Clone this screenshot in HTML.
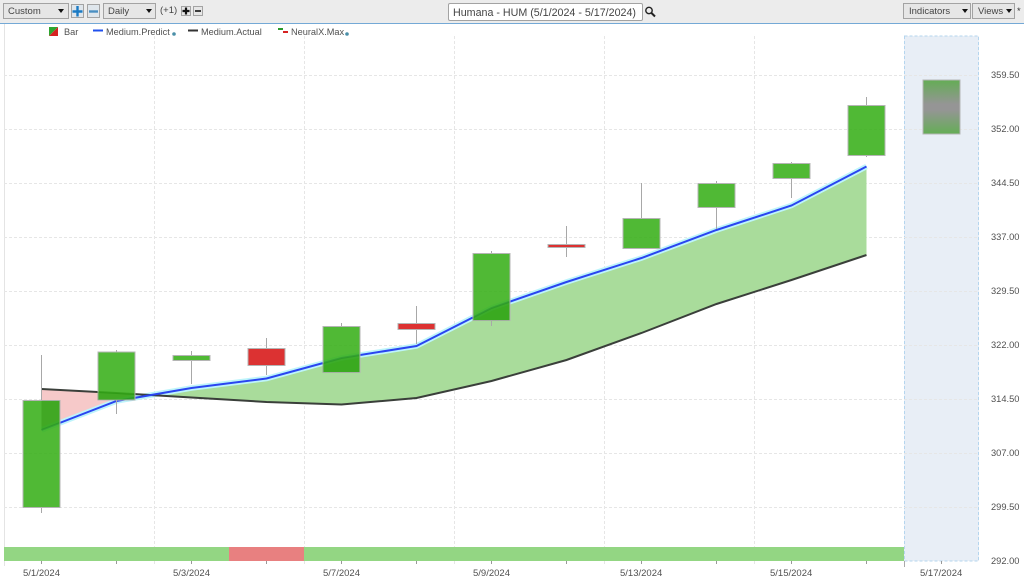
<!DOCTYPE html>
<html>
<head>
<meta charset="utf-8">
<style>
html,body{margin:0;padding:0;background:#fff}
#p{position:relative;width:1024px;height:583px;overflow:hidden;background:#fff;font-family:"Liberation Sans",sans-serif;color:#444}
#tb{position:absolute;left:0;top:0;width:1024px;height:23px;background:#ececec;border-bottom:1px solid #74a9d6}
.b{position:absolute;box-sizing:border-box;border:1px solid #a3a3a3;background:#e6e6e6;font-size:9.5px;line-height:15px;color:#444;white-space:nowrap;padding-left:4px}
.ar{position:absolute;width:0;height:0;border-left:3.5px solid transparent;border-right:3.5px solid transparent;border-top:4px solid #111}
.t{position:absolute;font-size:9.3px;line-height:12px;white-space:nowrap;color:#505050}
.x{font-size:9.5px}
.l{font-size:9.2px;top:26px}
svg{position:absolute;left:0;top:0}
</style>
</head>
<body>
<div id="p">
<div id="tb"></div>
<div class="b" style="left:3px;top:3px;width:66px;height:16px">Custom<span class="ar" style="left:54px;top:5px"></span></div>
<div class="b" style="left:71px;top:4px;width:13px;height:14px;background:#dfe6ec"></div>
<div class="b" style="left:87px;top:4px;width:13px;height:14px;background:#dfe6ec"></div>
<div class="b" style="left:103px;top:3px;width:53px;height:16px">Daily<span class="ar" style="left:42px;top:5px"></span></div>
<div class="t" style="left:160px;top:5px;color:#444;font-size:9.5px">(+1)</div>
<div class="b" style="left:181px;top:6px;width:10px;height:10px"></div>
<div class="b" style="left:193px;top:6px;width:10px;height:10px"></div>
<div class="b" style="left:448px;top:3px;width:195px;height:18px;background:#fff;border-radius:2px;font-size:10.7px;line-height:18px;padding-left:4px">Humana - HUM (5/1/2024 - 5/17/2024)</div>
<div class="b" style="left:903px;top:3px;width:68px;height:16px;padding-left:5px">Indicators<span class="ar" style="left:58px;top:5px"></span></div>
<div class="b" style="left:972px;top:3px;width:43px;height:16px;padding-left:5px">Views<span class="ar" style="left:33px;top:5px"></span></div>
<div class="t" style="left:1017px;top:5px;color:#333">*</div>

<svg width="1024" height="583" viewBox="0 0 1024 583">
<defs>
<linearGradient id="g" x1="0" y1="0" x2="0" y2="1">
<stop offset="0" stop-color="#64ad55"/><stop offset=".45" stop-color="#959595"/><stop offset=".55" stop-color="#959595"/><stop offset="1" stop-color="#64ad55"/>
</linearGradient>
<clipPath id="cc">
<rect x="22.500" y="400.500" width="37" height="107"/>
<rect x="97.500" y="352" width="37" height="48"/>
<rect x="322.500" y="326.500" width="37" height="46"/>
<rect x="472.500" y="253.500" width="37" height="67"/>
</clipPath>
</defs>
<!-- toolbar icons -->
<path d="M77.500 6v10.500M72.500 11.500h10" stroke="#1a7ac4" stroke-width="2.400" fill="none"/>
<path d="M89 11.500h9" stroke="#4a8fc2" stroke-width="2.400" fill="none"/>
<path d="M186 7.500v7M182.500 11h7" stroke="#111" stroke-width="2.200" fill="none"/>
<path d="M195 11h6" stroke="#111" stroke-width="1.600" fill="none"/>
<circle cx="649" cy="10.500" r="3.200" fill="none" stroke="#222" stroke-width="1.400"/>
<path d="M651.500 13l3.500 3.500" stroke="#222" stroke-width="2"/>
<!-- left rail -->
<path d="M4.500 24V566" stroke="#e4e4e4" stroke-width="1"/>
<!-- future panel -->
<rect x="904" y="36" width="75" height="525" fill="#e8eef6"/>
<path d="M904.500 36H978.500V561H904.500Z" fill="none" stroke="#b5d5ee" stroke-dasharray="3 2"/>
<!-- grid -->
<g stroke="#e6e6e6" stroke-dasharray="3 2" fill="none">
<path d="M4 75.500H979M4 129.500H979M4 183.500H979M4 237.500H979M4 291.500H979M4 345.500H979M4 399.500H979M4 453.500H979M4 507.500H979"/>
<path d="M154.500 36V566M304.500 36V566M454.500 36V566M604.500 36V566M754.500 36V566"/>
</g>
<!-- area fills -->
<path d="M41.500 389L116.500 393L153.500 395.200L116.500 401L41.500 430Z" fill="#f6c9c9"/>
<path d="M153.500 395.200L191.500 388L266.500 378.500L341.500 358L416.500 346L491.500 308L566.500 282L641.500 258L716.500 230L791.500 205.500L866.500 166.500V255L791.500 280L716.500 304L641.500 333L566.500 360L491.500 381L416.500 398L341.500 404.500L266.500 402L191.500 397.500Z" fill="#a9dc9b"/>
<!-- lines -->
<polyline points="41.500,430 116.500,401 191.500,388 266.500,378.500 341.500,358 416.500,346 491.500,308 566.500,282 641.500,258 716.500,230 791.500,205.500 866.500,166.500" fill="none" stroke="#bdf4fb" stroke-width="5.500"/>
<polyline points="41.500,389 116.500,393 191.500,397.500 266.500,402 341.500,404.500 416.500,398 491.500,381 566.500,360 641.500,333 716.500,304 791.500,280 866.500,255" fill="none" stroke="#3a3f3a" stroke-width="2"/>
<polyline points="41.500,430 116.500,401 191.500,388 266.500,378.500 341.500,358 416.500,346 491.500,308 566.500,282 641.500,258 716.500,230 791.500,205.500 866.500,166.500" fill="none" stroke="#2a45f0" stroke-width="2"/>
<!-- wicks, only outside the candle bodies -->
<path d="M41.500 355V400M41.500 508V513M116.500 350V352M116.500 400V414M191.500 351V355M191.500 361V384M266.500 338V348M266.500 366V375M341.500 323V326M416.500 306V323M416.500 330V344M491.500 251V253M491.500 321V326M566.500 226V244M566.500 248V257M641.500 183V218M716.500 181V183M716.500 208V229M791.500 162V163M791.500 179V198M866.500 97V105M866.500 156V157" stroke="#a8a8a8" stroke-width="1" fill="none"/>
<!-- candles -->
<g stroke="#b5b5b5" stroke-width="1">
<g fill="#38af19" fill-opacity=".88">
<rect x="23" y="400.500" width="37" height="107"/>
<rect x="98" y="352" width="37" height="48"/>
<rect x="173" y="355.500" width="37" height="5"/>
<rect x="323" y="326.500" width="37" height="46"/>
<rect x="473" y="253.500" width="37" height="67"/>
<rect x="623" y="218.500" width="37" height="30"/>
<rect x="698" y="183.500" width="37" height="24"/>
<rect x="773" y="163.500" width="37" height="15"/>
<rect x="848" y="105.500" width="37" height="50"/>
</g>
<g fill="#dc3232">
<rect x="248" y="348.500" width="37" height="17"/>
<rect x="398" y="323.500" width="37" height="6"/>
<rect x="548" y="244.500" width="37" height="3"/>
</g>
<rect x="923" y="80" width="37" height="54" fill="url(#g)"/>
</g>
<!-- darker tint where the area overlaps a candle -->
<g clip-path="url(#cc)">
<path d="M41.500 389L116.500 393L153.500 395.200L116.500 401L41.500 430Z" fill="rgba(20,130,0,.22)"/>
<path d="M153.500 395.200L191.500 388L266.500 378.500L341.500 358L416.500 346L491.500 308L566.500 282L641.500 258V333L566.500 360L491.500 381L416.500 398L341.500 404.500L266.500 402L191.500 397.500Z" fill="rgba(20,130,0,.22)"/>
</g>
<!-- bottom band -->
<rect x="4" y="547" width="225" height="14" fill="#93d683"/>
<rect x="229" y="547" width="75" height="14" fill="#e88080"/>
<rect x="304" y="547" width="600" height="14" fill="#93d683"/>
<!-- ticks -->
<path d="M41.500 561V564M116.500 561V564M191.500 561V564M266.500 561V564M341.500 561V564M416.500 561V564M491.500 561V564M566.500 561V564M641.500 561V564M716.500 561V564M791.500 561V564M866.500 561V564M941.500 561V564" stroke="#999"/>
<path d="M904.500 561V567" stroke="#aaa"/>
<!-- legend icons -->
<path d="M49 27H58L49 36Z" fill="#2fa52f"/><path d="M58 27V36H49Z" fill="#d62222"/>
<path d="M93 30.500H103" stroke="#2050ee" stroke-width="2"/>
<path d="M188 30.500H198" stroke="#333" stroke-width="2"/>
<rect x="278" y="28" width="5" height="2" fill="#2a9a2a"/>
<rect x="283" y="31" width="5" height="2" fill="#d62222"/>
<circle cx="174" cy="34" r="1.800" fill="#4a8fa8"/>
<circle cx="347" cy="34" r="1.800" fill="#4a8fa8"/>
</svg>

<!-- legend text -->
<div class="t l" style="left:64px">Bar</div>
<div class="t l" style="left:106px">Medium.Predict</div>
<div class="t l" style="left:201px">Medium.Actual</div>
<div class="t l" style="left:291px">NeuralX.Max</div>
<!-- y axis -->
<div class="t" style="left:991px;top:69px">359.50</div>
<div class="t" style="left:991px;top:123px">352.00</div>
<div class="t" style="left:991px;top:177px">344.50</div>
<div class="t" style="left:991px;top:231px">337.00</div>
<div class="t" style="left:991px;top:285px">329.50</div>
<div class="t" style="left:991px;top:339px">322.00</div>
<div class="t" style="left:991px;top:393px">314.50</div>
<div class="t" style="left:991px;top:447px">307.00</div>
<div class="t" style="left:991px;top:501px">299.50</div>
<div class="t" style="left:991px;top:555px">292.00</div>
<!-- x axis -->
<div class="t x" style="left:23px;top:568px">5/1/2024</div>
<div class="t x" style="left:173px;top:568px">5/3/2024</div>
<div class="t x" style="left:323px;top:568px">5/7/2024</div>
<div class="t x" style="left:473px;top:568px">5/9/2024</div>
<div class="t x" style="left:620px;top:568px">5/13/2024</div>
<div class="t x" style="left:770px;top:568px">5/15/2024</div>
<div class="t x" style="left:920px;top:568px">5/17/2024</div>
</div>
</body>
</html>
